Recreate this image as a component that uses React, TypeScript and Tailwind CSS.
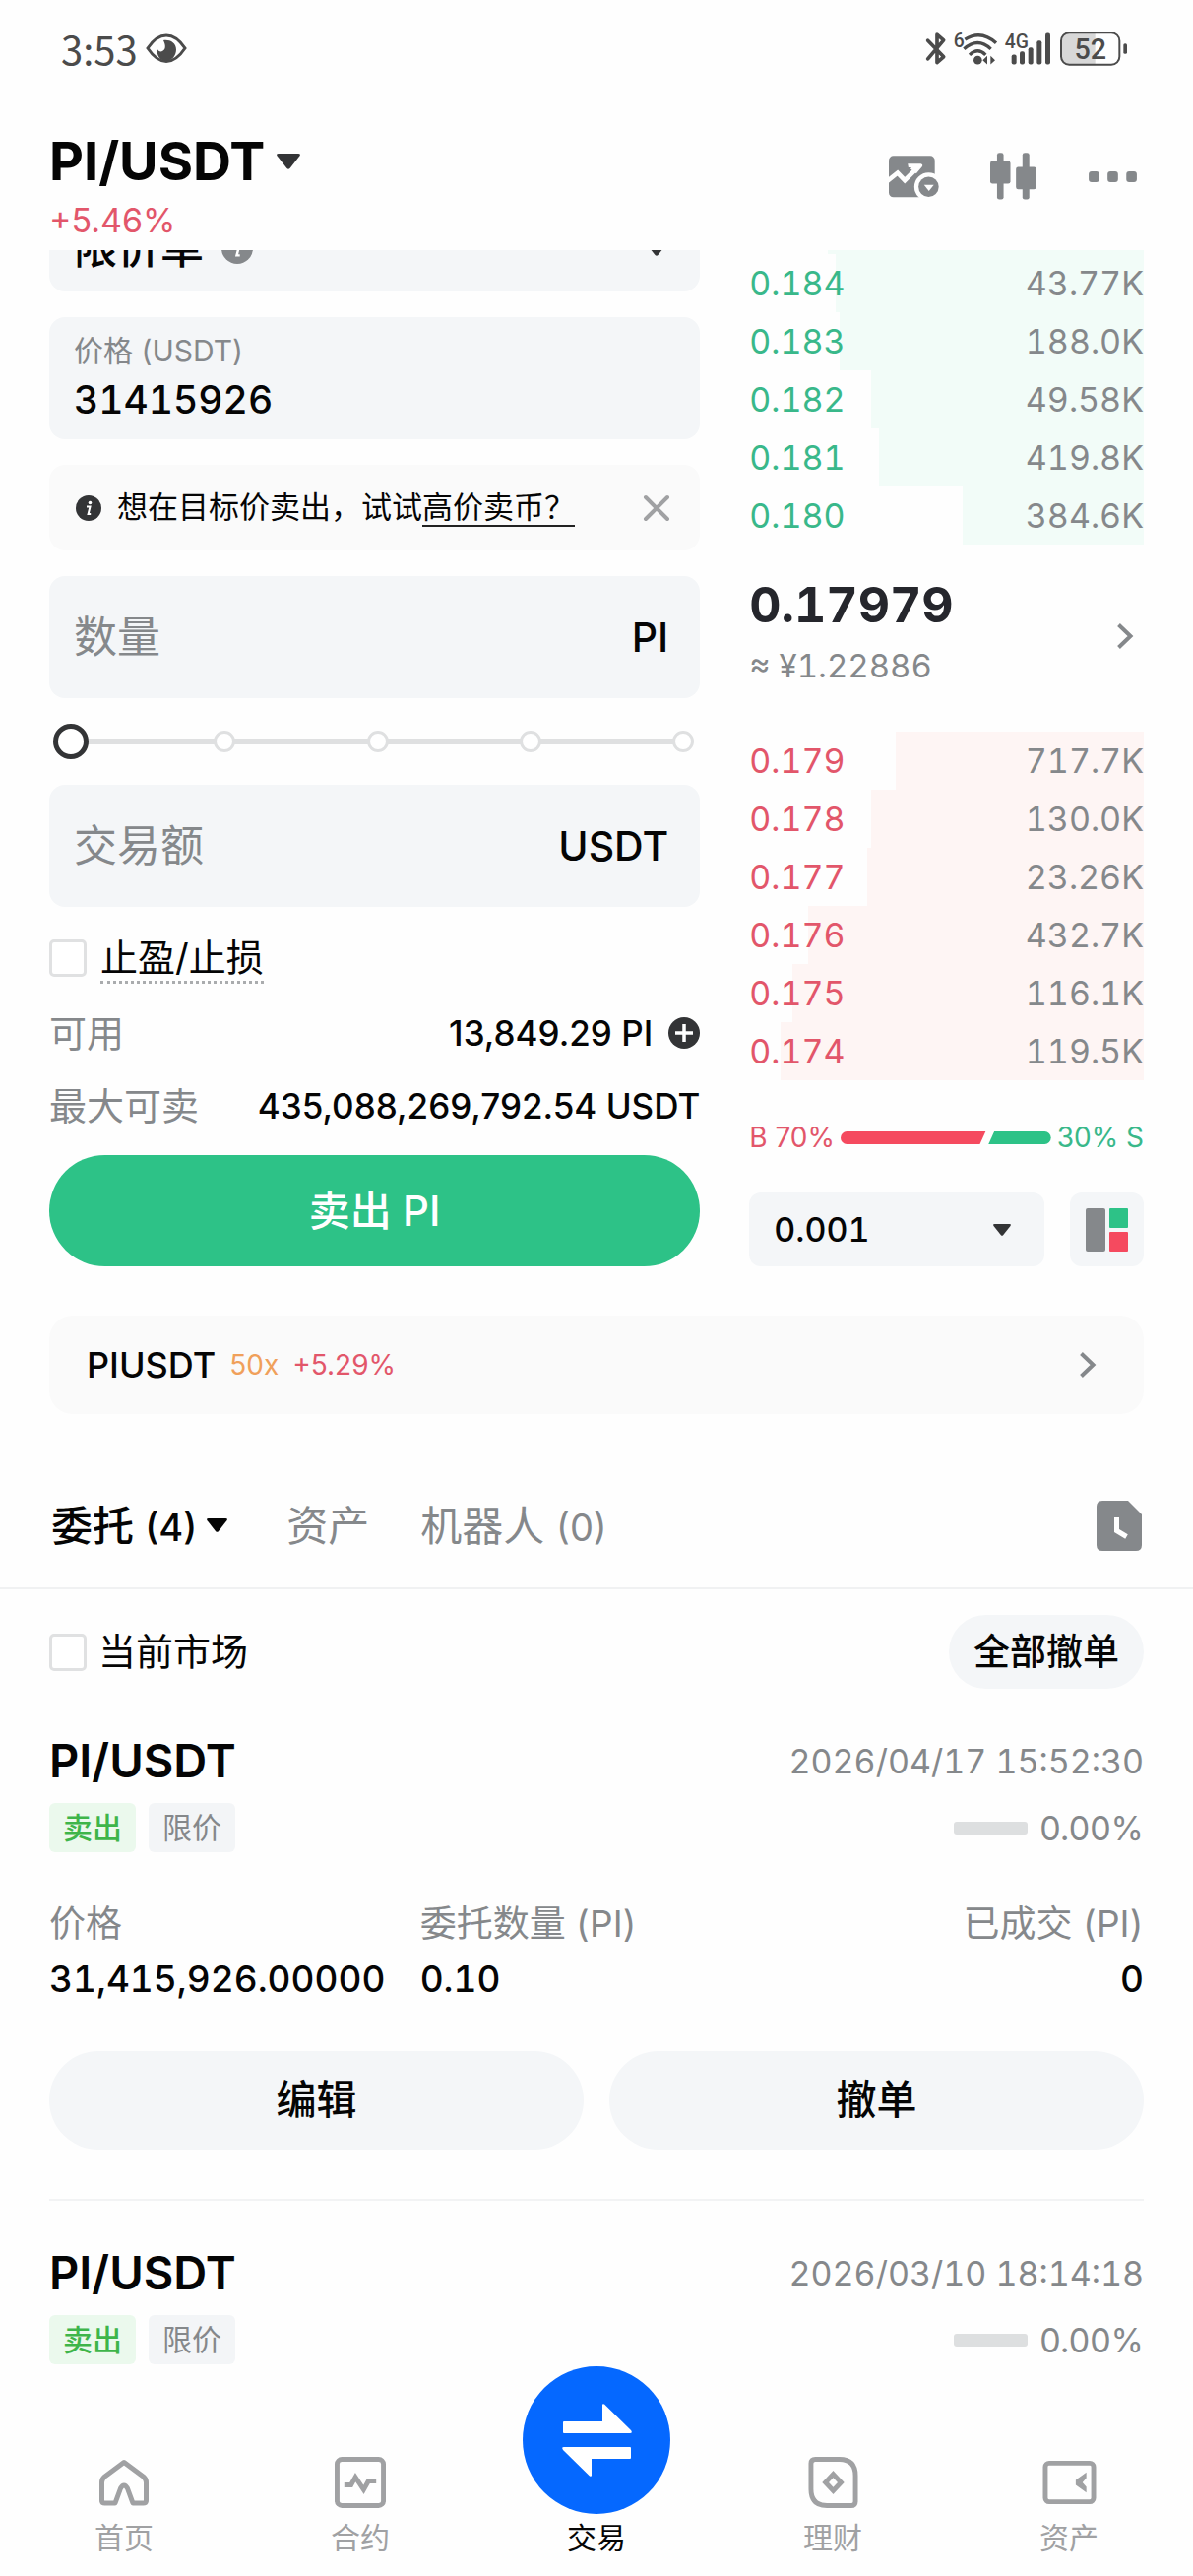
import type { FC, ReactNode } from "react";
import clsx from "clsx";

interface BookRow {
  price: string;
  amount: string;
  depth: number;
}

interface Order {
  id: string;
  pair: string;
  time: string;
  progress: string;
  price?: string;
  amount?: string;
  filled?: string;
}

const ASKS: BookRow[] = [
  { price: "0.184", amount: "43.77K", depth: 78 },
  { price: "0.183", amount: "188.0K", depth: 77 },
  { price: "0.182", amount: "49.58K", depth: 69 },
  { price: "0.181", amount: "419.8K", depth: 67 },
  { price: "0.180", amount: "384.6K", depth: 46 },
];

const BIDS: BookRow[] = [
  { price: "0.179", amount: "717.7K", depth: 63 },
  { price: "0.178", amount: "130.0K", depth: 69 },
  { price: "0.177", amount: "23.26K", depth: 70 },
  { price: "0.176", amount: "432.7K", depth: 85 },
  { price: "0.175", amount: "116.1K", depth: 89 },
  { price: "0.174", amount: "119.5K", depth: 92 },
];

const ORDERS: Order[] = [
  {
    id: "1",
    pair: "PI/USDT",
    time: "2026/04/17 15:52:30",
    progress: "0.00%",
    price: "31,415,926.00000",
    amount: "0.10",
    filled: "0",
  },
  { id: "2", pair: "PI/USDT", time: "2026/03/10 18:14:18", progress: "0.00%" },
];

const Caret: FC<{ className?: string }> = ({ className }) => (
  <svg viewBox="0 0 24 16" className={className} fill="currentColor" aria-hidden="true">
    <path d="M2 0h20q3 0 1.300 2.500L13.500 15q-1.500 1.500-3 0L.700 2.500Q-1 0 2 0z" />
  </svg>
);

const Chevron: FC = () => (
  <svg viewBox="0 0 18 28" className="h-7 w-[18px]" fill="none" stroke="#85888b" strokeWidth="4" aria-hidden="true">
    <path d="M2.500 2.500 14.500 14 2.500 25.500" />
  </svg>
);

const InfoIcon: FC<{ className?: string }> = ({ className }) => (
  <svg viewBox="0 0 26 26" className={className} aria-hidden="true">
    <circle cx="13" cy="13" r="13" fill="currentColor" />
    <circle cx="14.500" cy="7.500" r="1.800" fill="#fff" />
    <path d="M11 11.500h3.500L12.600 19h2.600" fill="none" stroke="#fff" strokeWidth="2" />
  </svg>
);

const StatusBar: FC = () => (
  <div className="flex h-[98px] items-center justify-between pl-[62px] pr-[66px] text-[#4b4b4b]">
    <div className="flex items-center gap-2">
      <span className="font-['Noto_Sans_CJK_SC',sans-serif] text-[40px] leading-[48px]">3:53</span>
      <svg viewBox="0 0 42 30" className="h-[30px] w-[42px]" aria-hidden="true">
        <path
          d="M2 15C8 6 14 2 21 2s13 4 19 13C34 24 28 28.500 21 28.500S8 24 2 15z"
          fill="none"
          stroke="currentColor"
          strokeWidth="3"
        />
        <path d="M18 7c6-1 13 2 13 9.500C31 23 26 28 21 28c-6 0-10-5-9.500-12.500C13 18 15 19 17 18c3-1.500 4-5 1-11z" fill="currentColor" />
      </svg>
    </div>
    <svg viewBox="300 92 618 110" className="h-[37px] w-[206px]" fill="currentColor" aria-hidden="true">
      <path
        d="M308 122 356 172 336 189V104l20 17-48 57"
        fill="none"
        stroke="currentColor"
        strokeWidth="11"
        strokeLinejoin="round"
        strokeLinecap="round"
      />
      <text x="386" y="141" fontSize="58" fontWeight="500" fontFamily="Roboto, sans-serif">6</text>
      <g fill="none" stroke="currentColor" strokeWidth="10">
        <path d="M421 119Q470 88 516 130" />
        <path d="M418 148Q460 110 500 148" />
        <path d="M435 166Q460 142 484 166" />
      </g>
      <circle cx="460" cy="182" r="13" />
      <path d="M475 182l14-13v26zM513 182l-14-13v26z" />
      <text x="542" y="146" fontSize="58" fontWeight="500" fontFamily="Roboto, sans-serif">4G</text>
      <rect x="563" y="165" width="15" height="30" rx="6" />
      <rect x="588" y="155" width="15" height="40" rx="6" />
      <rect x="614" y="143" width="15" height="52" rx="6" />
      <rect x="640" y="122" width="15" height="73" rx="6" />
      <rect x="666" y="99" width="15" height="96" rx="6" />
      <path d="M738 97h80v100h-80q-24 0-24-24v-52q0-24 24-24z" fill="#d8d8d8" />
      <rect x="714" y="98" width="178" height="98" rx="25" fill="none" stroke="currentColor" strokeWidth="6" />
      <rect x="904" y="131" width="11" height="32" rx="5" />
      <text x="803" y="179" textAnchor="middle" fontSize="86" fontWeight="500" fontFamily="Roboto, sans-serif">52</text>
    </svg>
  </div>
);

const Header: FC = () => (
  <header className="flex items-start justify-between px-[50px] pt-9 pb-2">
    <div>
      <button type="button" className="flex items-center gap-3 text-[54px] leading-[60px] font-bold">
        PI/USDT
        <Caret className="h-4 w-6 text-[#333436]" />
      </button>
      <p className="mt-2 text-[34px] leading-[44px] text-[#e2566a]">+5.46%</p>
    </div>
    <div className="mt-5 flex h-[50px] items-center gap-[52px] pr-[6px] text-[#85888b]">
      <button type="button" aria-label="行情图">
        <svg viewBox="0 0 154 128" className="h-[43px] w-[51px]" aria-hidden="true">
          <rect width="141" height="127" rx="14" fill="currentColor" />
          <path d="M-4 77 27 52 49 75 86 38" fill="none" stroke="#fefefe" strokeWidth="14" />
          <path d="M58 24h40q8 2 4 9L84 54 66 39l4-4H60z" fill="#fefefe" />
          <circle cx="122" cy="95" r="44" fill="#fefefe" />
          <circle cx="122" cy="95" r="31" fill="currentColor" />
          <path d="M108 89h30l-15 19z" fill="#fefefe" />
        </svg>
      </button>
      <button type="button" aria-label="K线">
        <svg viewBox="498 466 142 144" className="h-12 w-[47px]" fill="currentColor" aria-hidden="true">
          <rect x="519" y="466" width="20" height="143" rx="7" />
          <rect x="498" y="491" width="62" height="70" rx="7" />
          <rect x="597" y="466" width="21" height="143" rx="7" />
          <rect x="577" y="509" width="62" height="69" rx="7" />
        </svg>
      </button>
      <button type="button" aria-label="更多">
        <svg viewBox="0 0 151 34" className="h-[11px] w-[51px]" fill="currentColor" aria-hidden="true">
          <rect width="33" height="34" rx="9" />
          <rect x="59" width="33" height="34" rx="9" />
          <rect x="118" width="33" height="34" rx="9" />
        </svg>
      </button>
    </div>
  </header>
);

const AmountField: FC<{ id: string; label: string; unit: string }> = ({ id, label, unit }) => (
  <div className="flex h-[124px] items-center justify-between rounded-2xl bg-[#f4f6f8] pl-[25px] pr-8">
    <input
      id={id}
      aria-label={label}
      placeholder={label}
      className="w-full min-w-0 bg-transparent text-[44px] leading-[60px] outline-none placeholder:text-[#85888b]"
    />
    <span className="text-[41px] leading-[60px] font-medium">{unit}</span>
  </div>
);

const InfoRow: FC<{ label: string; children: ReactNode }> = ({ label, children }) => (
  <div className="flex h-12 items-center justify-between whitespace-nowrap">
    <span className="text-[38px] text-[#85888b]">{label}</span>
    <span className="flex items-center gap-4 text-[35px] font-medium">{children}</span>
  </div>
);

const Stop: FC = () => <span className="size-[22px] rounded-full border-[3px] border-[#dfe0e1] bg-white" />;

const OrderForm: FC = () => (
  <form className="-mt-[46px] flex min-w-0 flex-col gap-[26px]" onSubmit={(e) => e.preventDefault()}>
    {/* Order type */}
    <div className="flex h-[88px] items-center rounded-2xl bg-[#f4f6f8] pl-[25px] pr-8">
      <select aria-label="订单类型" className="appearance-none bg-transparent text-[44px] leading-[60px] font-medium">
        <option>限价单</option>
      </select>
      <InfoIcon className="ml-[18px] size-8 text-[#85888b]" />
      <Caret className="ml-auto h-4 w-6 text-[#333436]" />
    </div>

    {/* Price */}
    <div className="flex h-[124px] flex-col justify-center rounded-2xl bg-[#f4f6f8] px-[25px] pb-1">
      <label htmlFor="price" className="text-[30px] leading-[48px] text-[#85888b]">
        价格 (USDT)
      </label>
      <input
        id="price"
        defaultValue="31415926"
        className="w-full bg-transparent text-[39px] leading-[52px] font-medium tabular-nums outline-none"
      />
    </div>

    {/* Hint */}
    <div className="flex h-[87px] items-center rounded-2xl bg-[#fafafa] pl-[27px] pr-[30px] text-[31px] whitespace-nowrap">
      <InfoIcon className="mr-4 size-[26px] shrink-0 text-[#333436]" />
      <span>想在目标价卖出，试试</span>
      <a href="#" className="border-b-2 border-[#222] leading-9">
        高价卖币？
      </a>
      <button type="button" aria-label="关闭" className="ml-auto">
        <svg viewBox="0 0 28 28" className="size-7" stroke="#a0a1a3" strokeWidth="4" strokeLinecap="round" aria-hidden="true">
          <path d="M3 3l22 22M25 3L3 25" />
        </svg>
      </button>
    </div>

    <AmountField id="amount" label="数量" unit="PI" />

    {/* Percentage slider */}
    <div className="relative flex h-9 items-center">
      <span className="absolute inset-x-5 h-1.5 bg-[#dfe0e1]" />
      <div className="relative flex w-full items-center justify-between pl-3 pr-1.5">
        <Stop />
        <Stop />
        <Stop />
        <Stop />
        <Stop />
      </div>
      <span className="absolute left-1 size-9 rounded-full border-[5px] border-[#333436] bg-white" />
      <input
        type="range"
        min={0}
        max={100}
        step={25}
        defaultValue={0}
        aria-label="仓位比例"
        className="absolute inset-0 h-full w-full opacity-0"
      />
    </div>

    <AmountField id="total" label="交易额" unit="USDT" />

    <div className="flex h-[52px] items-center gap-3.5">
      <input
        id="tpsl"
        type="checkbox"
        className="size-[38px] appearance-none rounded-[5px] border-[3px] border-[#e0e1e2] bg-white"
      />
      <label htmlFor="tpsl" className="border-b-[3px] border-dotted border-[#aaacae] text-[38px] leading-[48px]">
        止盈/止损
      </label>
    </div>

    <InfoRow label="可用">
      13,849.29 PI
      <button type="button" aria-label="充值">
        <svg viewBox="0 0 32 32" className="size-8" aria-hidden="true">
          <circle cx="16" cy="16" r="16" fill="#333436" />
          <path d="M16 7v18M7 16h18" stroke="#fff" strokeWidth="3.500" />
        </svg>
      </button>
    </InfoRow>
    <InfoRow label="最大可卖">435,088,269,792.54 USDT</InfoRow>

    <button type="submit" className="h-[113px] rounded-full bg-[#2dc287] text-[42px] font-medium text-white">
      卖出 PI
    </button>
  </form>
);

const BookSide: FC<{ rows: BookRow[]; side: "up" | "down" }> = ({ rows, side }) => (
  <table className="block w-full text-[34px] tabular-nums">
    <tbody className="block">
      {rows.map((row) => (
        <tr key={row.price} className="relative flex h-[59px] items-center justify-between">
          <td className={clsx("relative z-10", side === "up" ? "text-[#39b88a]" : "text-[#e2566a]")}>{row.price}</td>
          <td className="relative z-10 text-[#85888b]">{row.amount}</td>
          <td
            aria-hidden="true"
            className={clsx("absolute inset-y-0 right-0", side === "up" ? "bg-[#f2fcf8]" : "bg-[#fef5f4]")}
            style={{ width: `${row.depth}%` }}
          />
        </tr>
      ))}
    </tbody>
  </table>
);

const OrderBook: FC = () => (
  <section className="flex min-w-0 flex-col">
    <div className="ml-auto h-1 w-4/5 bg-[#f2fcf8]" />
    <BookSide rows={ASKS} side="up" />

    <a href="#" className="flex h-[190px] items-center justify-between pr-2.5 pb-1">
      <div>
        <p className="text-[50px] leading-[60px] font-bold tabular-nums text-[#25262c]">0.17979</p>
        <p className="text-[33px] leading-[64px] tabular-nums text-[#85888b]">≈ ¥1.22886</p>
      </div>
      <Chevron />
    </a>

    <BookSide rows={BIDS} side="down" />

    {/* Buy / sell ratio */}
    <div className="mt-[38px] mb-9 flex h-10 items-center justify-between gap-1.5 text-[28px] whitespace-nowrap">
      <span className="text-[#e2566a]">B 70%</span>
      <svg viewBox="0 0 219 13" preserveAspectRatio="none" className="h-[13px] min-w-0 flex-1" aria-hidden="true">
        <path d="M6.500 0H151l-6 13H6.500a6.500 6.500 0 0 1 0-13z" fill="#f54a5f" />
        <path d="M160 0h52.500a6.500 6.500 0 0 1 0 13H154z" fill="#2dc287" />
      </svg>
      <span className="text-[#39b88a]">30% S</span>
    </div>

    <div className="flex gap-[26px]">
      <div className="relative flex flex-1 items-center">
        <select
          aria-label="价格精度"
          className="h-[75px] w-full appearance-none rounded-xl bg-[#f4f6f8] px-[25px] text-[34px] font-medium tabular-nums"
        >
          <option>0.001</option>
        </select>
        <Caret className="pointer-events-none absolute right-[34px] h-3 w-[18px] text-[#333436]" />
      </div>
      <button type="button" aria-label="盘口布局" className="flex size-[75px] items-center justify-center rounded-xl bg-[#f4f6f8]">
        <svg viewBox="0 0 43 44" className="h-11 w-[43px]" aria-hidden="true">
          <rect width="20" height="44" rx="2" fill="#85888b" />
          <rect x="24" width="19" height="20" rx="1" fill="#2dc287" />
          <rect x="24" y="24" width="19" height="20" rx="1" fill="#f54a5f" />
        </svg>
      </button>
    </div>
  </section>
);

const OrderCard: FC<{ order: Order }> = ({ order }) => (
  <article className="pt-[43px] not-last:border-b-2 not-last:border-[#f2f3f4] not-last:pb-[50px]">
    <div className="flex h-[60px] items-center justify-between">
      <h2 className="text-[47px] leading-[60px] font-semibold">{order.pair}</h2>
      <time className="text-[34px] tabular-nums text-[#85888b]">{order.time}</time>
    </div>
    <div className="mt-[13px] flex h-[50px] items-center justify-between">
      <div className="flex gap-[13px] text-[30px] leading-[50px]">
        <span className="rounded-md bg-[#ebf9ed] px-3.5 font-medium text-[#3eb54a]">卖出</span>
        <span className="rounded-md bg-[#f3f5f7] px-3.5 text-[#85888b]">限价</span>
      </div>
      <div className="flex items-center gap-3">
        <span className="h-[13px] w-[75px] rounded-[3px] bg-[#dddfe0]" />
        <span className="text-[34px] text-[#85888b]">{order.progress}</span>
      </div>
    </div>

    {order.price && (
      <>
        <dl className="mt-[47px] grid grid-cols-[1.05fr_1fr_1.05fr] text-[37px] leading-[52px] tabular-nums">
          <div>
            <dt className="text-[#85888b]">价格</dt>
            <dd className="mt-1 font-medium">{order.price}</dd>
          </div>
          <div>
            <dt className="text-[#85888b]">委托数量 (PI)</dt>
            <dd className="mt-1 font-medium">{order.amount}</dd>
          </div>
          <div className="text-right">
            <dt className="text-[#85888b]">已成交 (PI)</dt>
            <dd className="mt-1 font-medium">{order.filled}</dd>
          </div>
        </dl>
        <div className="mt-[47px] flex gap-[26px] text-[41px] font-medium">
          <button type="button" className="h-[100px] flex-1 rounded-full bg-[#f4f6f8]">编辑</button>
          <button type="button" className="h-[100px] flex-1 rounded-full bg-[#f4f6f8]">撤单</button>
        </div>
      </>
    )}
  </article>
);

const NavItem: FC<{ label: string; active?: boolean; children: ReactNode }> = ({ label, active, children }) => (
  <a
    href="#"
    className={clsx(
      "flex flex-1 flex-col items-center text-[30px] leading-10",
      active ? "gap-1 text-[#050505]" : "gap-2.5 text-[#a0a1a3]"
    )}
  >
    {children}
    <span>{label}</span>
  </a>
);

const BottomNav: FC = () => (
  <nav className="mt-auto flex h-[169px] items-end px-1.5 pb-[19px]">
    <NavItem label="首页">
      <svg viewBox="0 0 52 52" className="size-[52px]" fill="none" stroke="currentColor" strokeWidth="5" strokeLinejoin="round" aria-hidden="true">
        <path d="M26 5.500 45.500 20q3 2.500 3 6v18q0 3-3 3H35l-5.500-15q-3.500-6-7 0L17 47H6.500q-3 0-3-3V26q0-3.500 3-6z" />
      </svg>
    </NavItem>
    <NavItem label="合约">
      <svg viewBox="0 0 53 53" className="size-[52px]" fill="none" stroke="currentColor" strokeWidth="5" aria-hidden="true">
        <rect x="2.500" y="2.500" width="48" height="48" rx="5" />
        <path d="M10 29h7l4.500-8 8.500 13 5-9h8" />
      </svg>
    </NavItem>
    <NavItem label="交易" active>
      <span className="flex size-[150px] items-center justify-center rounded-full bg-[#0568ff]">
        <svg viewBox="0 0 71 74" className="h-[74px] w-[71px]" fill="#fff" aria-hidden="true">
          <path d="M2 18h39V1.500q0-2 2-1L70 27q2 3-1 3H2q-1 0-1-1V19q0-1 1-1z" />
          <path d="M69 56H30v16.500q0 2-2 1L1 47q-2-3 1-3h67q1 0 1 1v10q0 1-1 1z" />
        </svg>
      </span>
    </NavItem>
    <NavItem label="理财">
      <svg viewBox="0 0 51 53" className="h-[52px] w-[51px]" fill="none" stroke="currentColor" strokeWidth="5" aria-hidden="true">
        <path d="M7 2.500h25q16.500 0 16.500 17V46q0 4.500-4.500 4.500H19Q2.500 50.500 2.500 33.500V7q0-4.500 4.500-4.500z" />
        <path d="M25.500 18l8 8.500-8 8.500-8-8.500z" />
      </svg>
    </NavItem>
    <NavItem label="资产">
      <svg viewBox="0 0 55 53" className="h-[52px] w-[55px]" aria-hidden="true">
        <rect x="2.500" y="6.500" width="50" height="40" rx="4" fill="none" stroke="currentColor" strokeWidth="5" />
        <path d="M45 16 34 24v5l11 8v-6l-4-4.500 4-4.500z" fill="currentColor" />
      </svg>
    </NavItem>
  </nav>
);

export default function App() {
  return (
    <div className="flex min-h-screen flex-col bg-[#fefefe] font-['Inter','Noto_Sans_CJK_SC',sans-serif] text-[#050505]">
      <StatusBar />
      <Header />

      <main className="overflow-hidden">
        <div className="grid grid-cols-[1.65fr_1fr] gap-[50px] px-[50px]">
          <OrderForm />
          <OrderBook />
        </div>

        {/* Perpetual contract link */}
        <a href="#" className="mx-[50px] mt-[50px] flex h-[100px] items-center rounded-3xl bg-[#fafafa] pl-[38px] pr-12">
          <span className="text-[36px] font-medium">PIUSDT</span>
          <span className="ml-3.5 text-[28px] text-[#f0a05a]">50x</span>
          <span className="ml-3.5 mr-auto text-[28px] text-[#e2566a]">+5.29%</span>
          <Chevron />
        </a>

        {/* Tabs */}
        <div className="mt-[50px] flex h-[128px] items-center gap-[60px] border-b-2 border-[#f0f1f2] px-[52px] text-[42px] text-[#85888b]">
          <button type="button" className="flex items-center gap-2.5 font-medium text-[#050505]">
            <span>
              委托 <span className="text-[38px]">(4)</span>
            </span>
            <Caret className="h-3.5 w-[21px]" />
          </button>
          <button type="button">资产</button>
          <button type="button" className="-ml-2">
            机器人 <span className="text-[38px]">(0)</span>
          </button>
          <button type="button" aria-label="历史记录" className="ml-auto">
            <svg viewBox="0 0 46 51" className="h-[51px] w-[46px]" aria-hidden="true">
              <path d="M6 0h26l14 14v31q0 6-6 6H6q-6 0-6-6V6q0-6 6-6z" fill="#85888b" />
              <path d="M20.500 17v13.500l10 6" fill="none" stroke="#fff" strokeWidth="5" />
            </svg>
          </button>
        </div>

        <div className="px-[50px]">
          <div className="mt-[26px] flex items-center gap-3 text-[38px]">
            <input
              id="market"
              type="checkbox"
              className="size-[38px] appearance-none rounded-[5px] border-[3px] border-[#e0e1e2] bg-white"
            />
            <label htmlFor="market">当前市场</label>
            <button type="button" className="ml-auto h-[75px] rounded-full bg-[#f4f6f8] px-[25px] text-[37px] font-medium">
              全部撤单
            </button>
          </div>

          {ORDERS.map((order) => (
            <OrderCard key={order.id} order={order} />
          ))}
        </div>
      </main>

      <BottomNav />
    </div>
  );
}
